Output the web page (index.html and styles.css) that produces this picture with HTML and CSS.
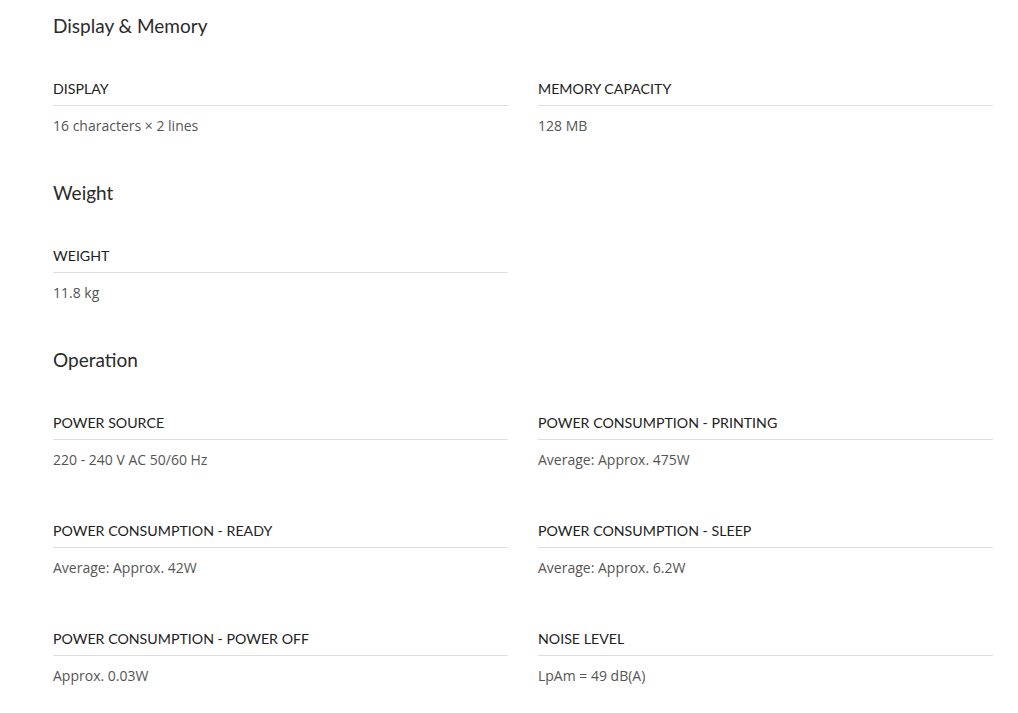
FILE: index.html
```html
<!DOCTYPE html>
<html>
<head>
<meta charset="utf-8">
<link rel="stylesheet" href="styles.css">
</head>
<body>
<div class="page">
  <section class="sec">
    <h2 class="sec-title">Display &amp; Memory</h2>
    <div class="grid">
      <div class="item"><div class="label">DISPLAY</div><div class="value">16 characters × 2 lines</div></div>
      <div class="item"><div class="label">MEMORY CAPACITY</div><div class="value">128 MB</div></div>
    </div>
  </section>
  <section class="sec">
    <h2 class="sec-title">Weight</h2>
    <div class="grid">
      <div class="item"><div class="label">WEIGHT</div><div class="value">11.8 kg</div></div>
    </div>
  </section>
  <section class="sec">
    <h2 class="sec-title">Operation</h2>
    <div class="grid">
      <div class="item"><div class="label">POWER SOURCE</div><div class="value">220 - 240 V AC 50/60 Hz</div></div>
      <div class="item"><div class="label">POWER CONSUMPTION - PRINTING</div><div class="value">Average: Approx. 475W</div></div>
      <div class="item"><div class="label">POWER CONSUMPTION - READY</div><div class="value">Average: Approx. 42W</div></div>
      <div class="item"><div class="label">POWER CONSUMPTION - SLEEP</div><div class="value">Average: Approx. 6.2W</div></div>
      <div class="item"><div class="label">POWER CONSUMPTION - POWER OFF</div><div class="value">Approx. 0.03W</div></div>
      <div class="item"><div class="label">NOISE LEVEL</div><div class="value">LpAm = 49 dB(A)</div></div>
    </div>
  </section>
</div>
</body>
</html>
```
FILE: styles.css
```css
html, body { margin: 0; padding: 0; background: #fff; }
.page {
  width: 940px;
  margin-left: 53px;
  padding-top: 11px;
  font-family: "Open Sans", sans-serif;
}
.sec { margin-bottom: 42px; }
.sec-title {
  margin: 0;
  padding-top: 1px;
  font-family: "Lato", sans-serif;
  font-weight: 400;
  font-size: 19px;
  line-height: 27px;
  color: #2a2a2a;
}
.grid {
  margin-top: 39px;
  display: grid;
  grid-template-columns: 455px 455px;
  column-gap: 30px;
  row-gap: 50px;
}
.label {
  font-family: "Lato", sans-serif;
  font-size: 14.2px;
  line-height: 20px;
  color: #222;
  padding-top: 1px;
  padding-bottom: 6px;
  border-bottom: 1px solid #ddd;
}
.value {
  margin-top: 10px;
  font-size: 14px;
  line-height: 20px;
  color: #555;
}
```
